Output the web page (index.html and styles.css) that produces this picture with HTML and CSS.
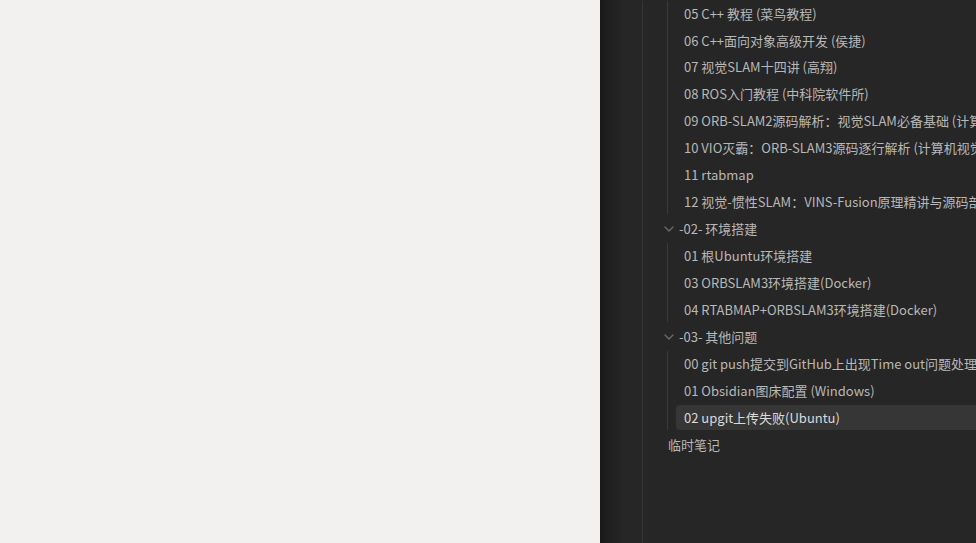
FILE: index.html
```html
<!DOCTYPE html>
<html lang="zh">
<head>
<meta charset="utf-8">
<title>Files</title>
<link rel="stylesheet" href="styles.css">
</head>
<body>
<div class="editor"></div>
<div class="sidebar">
  <div class="tree lvl1">
    <div class="children">
      <div class="item">05 C++ 教程 (菜鸟教程)</div>
      <div class="item">06 C++面向对象高级开发 (侯捷)</div>
      <div class="item">07 视觉SLAM十四讲 (高翔)</div>
      <div class="item">08 ROS入门教程 (中科院软件所)</div>
      <div class="item">09 ORB-SLAM2源码解析：视觉SLAM必备基础 (计算机视觉life)</div>
      <div class="item">10 VIO灭霸：ORB-SLAM3源码逐行解析 (计算机视觉life)</div>
      <div class="item">11 rtabmap</div>
      <div class="item">12 视觉-惯性SLAM：VINS-Fusion原理精讲与源码剖析</div>
    </div>
    <div class="folder"><svg class="chev" viewBox="0 0 10 6" width="10" height="6"><path d="M1 1 L5 5 L9 1" fill="none" stroke="currentColor" stroke-width="1.4" stroke-linecap="round" stroke-linejoin="round"/></svg>-02- 环境搭建</div>
    <div class="children">
      <div class="item">01 根Ubuntu环境搭建</div>
      <div class="item">03 ORBSLAM3环境搭建(Docker)</div>
      <div class="item">04 RTABMAP+ORBSLAM3环境搭建(Docker)</div>
    </div>
    <div class="folder"><svg class="chev" viewBox="0 0 10 6" width="10" height="6"><path d="M1 1 L5 5 L9 1" fill="none" stroke="currentColor" stroke-width="1.4" stroke-linecap="round" stroke-linejoin="round"/></svg>-03- 其他问题</div>
    <div class="children">
      <div class="item">00 git push提交到GitHub上出现Time out问题处理</div>
      <div class="item">01 Obsidian图床配置 (Windows)</div>
      <div class="item active">02 upgit上传失败(Ubuntu)</div>
    </div>
    <div class="item top">临时笔记</div>
  </div>
</div>
</body>
</html>
```
FILE: styles.css
```css
html, body {
  margin: 0;
  height: 100%;
  overflow: hidden;
}
body {
  display: flex;
  font-family: "Noto Sans CJK SC", "Noto Sans", sans-serif;
  font-size: 13px;
}
.editor {
  width: 600px;
  flex: none;
  background: #f2f1f0;
}
.sidebar {
  flex: 1;
  min-width: 0;
  display: flex;
  flex-direction: column;
  background: linear-gradient(to right, #191919 0, #212121 12px, #262626 26px);
  padding-top: 0.6px;
  overflow: hidden;
}
.tree.lvl1 {
  flex: 1;
  margin-left: 42px;
  border-left: 1px solid #363636;
  padding-left: 17px;
}
.children {
  margin-left: 7px;
  border-left: 1px solid #3a3a3a;
  padding-left: 8px;
}
.item, .folder {
  padding: 4px 8px;
  line-height: 17px;
  height: 17px;
  margin-bottom: 1.94px;
  color: #b8b8b8;
  white-space: nowrap;
  border-radius: 4px 0 0 4px;
}
.folder {
  position: relative;
  padding-left: 19px;
}
.chev {
  position: absolute;
  left: 4px;
  top: 10px;
  color: #6a6a6a;
}
.item.active {
  background: #363636;
  color: #dadada;
}
```
